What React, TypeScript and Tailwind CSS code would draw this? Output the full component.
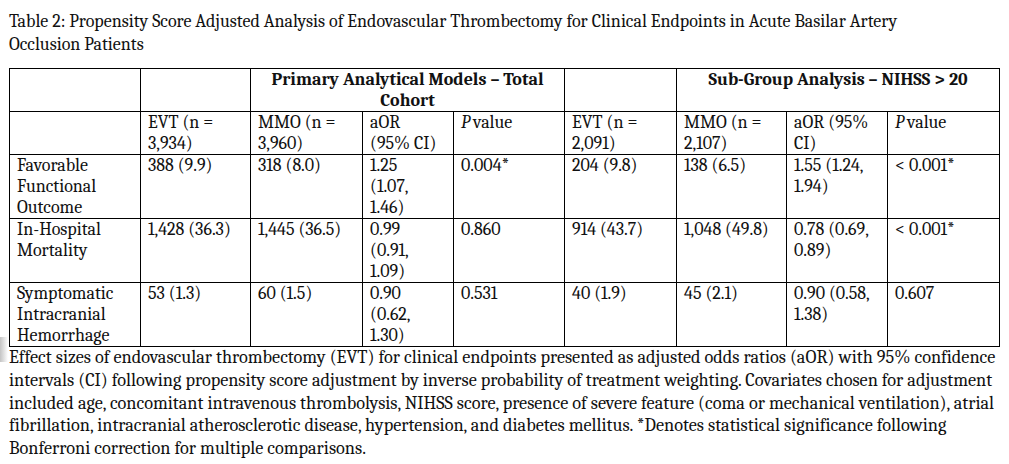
import React from 'react';

const cols = [131, 110, 112, 91, 111, 112, 110, 101, 112];

const rows = [
  {
    label: 'Favorable Functional Outcome',
    cells: ['388 (9.9)', '318 (8.0)', '1.25 (1.07, 1.46)', '0.004*', '204 (9.8)', '138 (6.5)', '1.55 (1.24, 1.94)', '< 0.001*'],
  },
  {
    label: 'In-Hospital Mortality',
    cells: ['1,428 (36.3)', '1,445 (36.5)', '0.99 (0.91, 1.09)', '0.860', '914 (43.7)', '1,048 (49.8)', '0.78 (0.69, 0.89)', '< 0.001*'],
  },
  {
    label: 'Symptomatic Intracranial Hemorrhage',
    cells: ['53 (1.3)', '60 (1.5)', '0.90 (0.62, 1.30)', '0.531', '40 (1.9)', '45 (2.1)', '0.90 (0.58, 1.38)', '0.607'],
  },
];

const td = 'border border-black align-top pl-[7px] pr-[11px] py-0 text-left font-normal';
// the narrow aOR column of the primary cohort wraps earlier
const tdNarrow = 'border border-black align-top pl-[7px] pr-[16px] py-0 text-left font-normal';

function PValue() {
  return (
    <>
      <i className="pr-[3px]">P</i>value
    </>
  );
}

export default function App() {
  return (
    <div className="relative w-[1009px] h-[464px] bg-white text-[#111111] font-serif [font-family:Liberation_Serif,Times_New_Roman,serif] text-[18px] overflow-hidden">
      {/* scan artefact at the left edge */}
      <div className="absolute left-0 top-[337px] w-[8px] h-[25px] bg-gradient-to-r from-[#c4c4c4] to-white" />

      <div className="pl-[9px] pt-[10px]">
        <p className="leading-[23px]">
          Table 2: Propensity Score Adjusted Analysis of Endovascular Thrombectomy for Clinical Endpoints in Acute Basilar Artery
          <br />
          Occlusion Patients
        </p>

        <table className="mt-[12px] w-[991px] table-fixed border-collapse border border-black leading-[21px]">
          <colgroup>
            {cols.map((w, i) => (
              <col key={i} style={{ width: w }} />
            ))}
          </colgroup>
          <thead>
            <tr className="h-[43px]">
              <th className={td} />
              <th className={td} />
              <th colSpan={3} className="border border-black align-top px-[8px] py-0 text-center font-bold">
                Primary Analytical Models – Total Cohort
              </th>
              <th className={td} />
              <th colSpan={3} className="border border-black align-top px-[8px] py-0 text-center font-bold">
                Sub-Group Analysis – NIHSS &gt; 20
              </th>
            </tr>
            <tr className="h-[43px]">
              <th className={td} />
              <th className={td}>EVT (n = 3,934)</th>
              <th className={td}>MMO (n = 3,960)</th>
              <th className={tdNarrow}>aOR (95% CI)</th>
              <th className={td}>
                <PValue />
              </th>
              <th className={td}>EVT (n = 2,091)</th>
              <th className={td}>MMO (n = 2,107)</th>
              <th className={td}>aOR (95% CI)</th>
              <th className={td}>
                <PValue />
              </th>
            </tr>
          </thead>
          <tbody>
            {rows.map((r) => (
              <tr key={r.label} className="h-[64px]">
                <td className={td}>{r.label}</td>
                {r.cells.map((c, i) => (
                  <td key={i} className={i === 2 ? tdNarrow : td}>
                    {c}
                  </td>
                ))}
              </tr>
            ))}
          </tbody>
        </table>

        <p className="leading-[22.75px] text-[18.25px]">
          Effect sizes of endovascular thrombectomy (EVT) for clinical endpoints presented as adjusted odds ratios (aOR) with 95% confidence
          <br />
          intervals (CI) following propensity score adjustment by inverse probability of treatment weighting. Covariates chosen for adjustment
          <br />
          included age, concomitant intravenous thrombolysis, NIHSS score, presence of severe feature (coma or mechanical ventilation), atrial
          <br />
          fibrillation, intracranial atherosclerotic disease, hypertension, and diabetes mellitus. *Denotes statistical significance following
          <br />
          Bonferroni correction for multiple comparisons.
        </p>
      </div>
    </div>
  );
}
